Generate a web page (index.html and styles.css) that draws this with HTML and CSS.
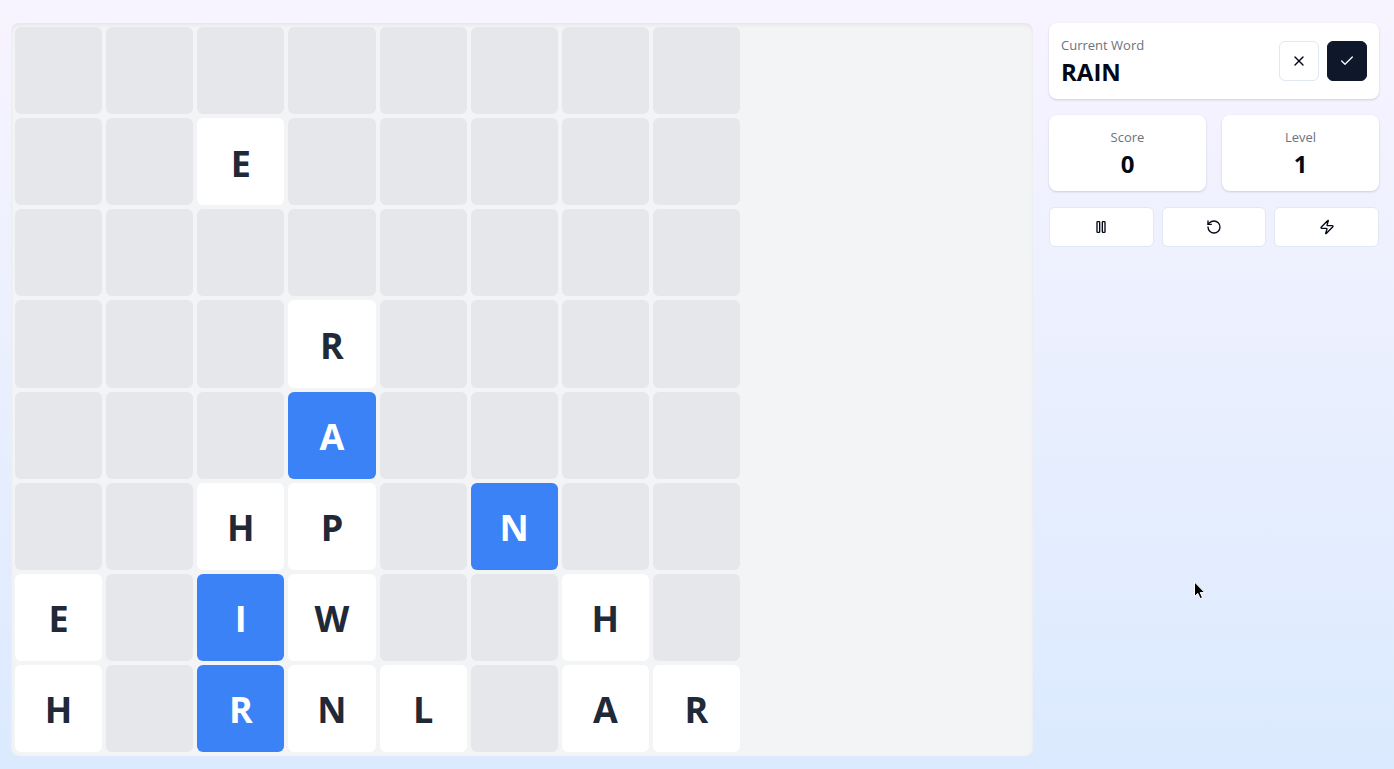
FILE: index.html
```html
<!DOCTYPE html>
<html lang="en">

<head>
	<meta charset="UTF-8">
	<meta name="viewport" content="width=device-width, initial-scale=1.0">
	<title>Word Game</title>
	<link rel="stylesheet" href="styles.css">
</head>

<body>
	<main class="game">
		<div class="board" id="board"></div>

		<aside class="sidebar">
			<div class="card word-card">
				<div>
					<div class="label">Current Word</div>
					<div class="value" id="currentWord"></div>
				</div>
				<div class="word-actions">
					<button class="btn btn-icon" aria-label="Clear word" id="clearBtn">
						<svg class="icon" viewBox="0 0 24 24"><path d="M18 6 6 18" /><path d="m6 6 12 12" /></svg>
					</button>
					<button class="btn btn-icon btn-dark" aria-label="Submit word">
						<svg class="icon" viewBox="0 0 24 24"><path d="M20 6 9 17l-5-5" /></svg>
					</button>
				</div>
			</div>

			<div class="stats">
				<div class="card stat">
					<div class="label">Score</div>
					<div class="value">0</div>
				</div>
				<div class="card stat">
					<div class="label">Level</div>
					<div class="value">1</div>
				</div>
			</div>

			<div class="controls">
				<button class="btn" aria-label="Pause">
					<svg class="icon" viewBox="0 0 24 24"><rect x="14" y="4" width="4" height="16" rx="1" /><rect x="6" y="4" width="4" height="16" rx="1" /></svg>
				</button>
				<button class="btn" aria-label="Restart">
					<svg class="icon" viewBox="0 0 24 24"><path d="M3 12a9 9 0 1 0 9-9 9.75 9.75 0 0 0-6.74 2.74L3 8" /><path d="M3 3v5h5" /></svg>
				</button>
				<button class="btn" aria-label="Speed up">
					<svg class="icon" viewBox="0 0 24 24"><path d="M4 14a1 1 0 0 1-.78-1.63l9.9-10.2a.5.5 0 0 1 .86.46l-1.92 6.02A1 1 0 0 0 13 10h7a1 1 0 0 1 .78 1.63l-9.9 10.2a.5.5 0 0 1-.86-.46l1.92-6.02A1 1 0 0 0 11 14z" /></svg>
				</button>
			</div>
		</aside>
	</main>

	<svg class="cursor" viewBox="0 0 12 19" aria-hidden="true">
		<path d="M.5 1v14.500l3.300-3.100 2.300 5.200 2.400-1-2.300-5h4.600z" />
	</svg>

	<script>
		const rows = [
			'........',
			'..E.....',
			'........',
			'...R....',
			'...A....',
			'..HP.N..',
			'E.IW..H.',
			'H.RNL.AR'
		];

		// [row, column] in the order the tiles were picked
		let selected = [[7, 2], [4, 3], [6, 2], [5, 5]];

		const board = document.getElementById('board');

		function isSelected(r, c) {
			return selected.some(s => s[0] === r && s[1] === c);
		}

		function toggleTile(r, c) {
			if (isSelected(r, c)) {
				selected = selected.filter(s => s[0] !== r || s[1] !== c);
			} else {
				selected.push([r, c]);
			}
			render();
		}

		function render() {
			board.innerHTML = '';
			rows.forEach((row, r) => {
				[...row].forEach((letter, c) => {
					const empty = letter === '.';
					const cell = document.createElement(empty ? 'div' : 'button');
					cell.className = 'cell';
					if (!empty) {
						cell.className += isSelected(r, c) ? ' tile selected' : ' tile';
						cell.textContent = letter;
						cell.onclick = () => toggleTile(r, c);
					}
					board.appendChild(cell);
				});
			});
			document.getElementById('currentWord').textContent = selected.map(s => rows[s[0]][s[1]]).join('');
		}

		document.getElementById('clearBtn').onclick = () => {
			selected = [];
			render();
		};

		render();
	</script>
</body>

</html>
```
FILE: styles.css
```css
* {
	box-sizing: border-box;
}

body {
	--cell: calc((100vh - 72px) / 8);
	position: relative;
	min-height: 100vh;
	margin: 0;
	padding: 23px 15px 13px 11px;
	font-family: "Segoe UI", "Open Sans", sans-serif;
	color: #020817;
	background: linear-gradient(to bottom, #f8f4ff, #dbeafe);
}

.game {
	display: grid;
	grid-template-columns: repeat(4, 1fr);
	gap: 16px;
	align-items: start;
}

.board {
	grid-column: span 3;
	display: grid;
	grid-template-columns: repeat(8, var(--cell));
	grid-auto-rows: var(--cell);
	gap: 4px;
	padding: 4px;
	border-radius: 8px;
	background: #f3f4f6;
	box-shadow: inset 0 2px 4px rgba(0, 0, 0, 0.06);
}

.cell {
	border-radius: 6px;
	background: #e5e7eb;
}

.tile {
	padding: 4px 0 0;
	border: none;
	font-family: inherit;
	font-size: 36px;
	line-height: 40px;
	font-weight: bold;
	color: #1f2937;
	background: #fff;
	cursor: pointer;
}

.tile.selected {
	color: #fff;
	background: #3b82f6;
}

.sidebar {
	display: flex;
	flex-direction: column;
	gap: 16px;
}

.card {
	padding: 12px;
	border-radius: 8px;
	background: #fff;
	box-shadow: 0 1px 3px rgba(0, 0, 0, 0.1), 0 1px 2px rgba(0, 0, 0, 0.06);
}

.word-card {
	display: flex;
	align-items: center;
	justify-content: space-between;
}

.word-actions {
	display: flex;
	gap: 8px;
}

.label {
	font-size: 13px;
	line-height: 20px;
	color: #6b7280;
}

.value {
	min-height: 32px;
	padding-top: 2px;
	font-size: 24px;
	line-height: 30px;
	font-weight: bold;
}

.stats {
	display: grid;
	grid-template-columns: 1fr 1fr;
	gap: 16px;
}

.stat {
	text-align: center;
}

.controls {
	display: grid;
	grid-template-columns: repeat(3, 1fr);
	gap: 8px;
}

.btn {
	display: flex;
	align-items: center;
	justify-content: center;
	height: 40px;
	padding: 0;
	border: 1px solid #e2e8f0;
	border-radius: 6px;
	color: #020817;
	background: #fff;
	cursor: pointer;
}

.btn:hover {
	background: #f1f5f9;
}

.btn-icon {
	width: 40px;
}

.btn-dark,
.btn-dark:hover {
	border-color: #0f172a;
	color: #f8fafc;
	background: #0f172a;
}

.icon {
	width: 16px;
	height: 16px;
	fill: none;
	stroke: currentColor;
	stroke-width: 2;
	stroke-linecap: round;
	stroke-linejoin: round;
}

/* pointer floating over the page */
.cursor {
	position: absolute;
	top: 581px;
	right: 188px;
	width: 12px;
	height: 19px;
	fill: #000;
	stroke: #fff;
	stroke-width: 1;
	pointer-events: none;
}
```
